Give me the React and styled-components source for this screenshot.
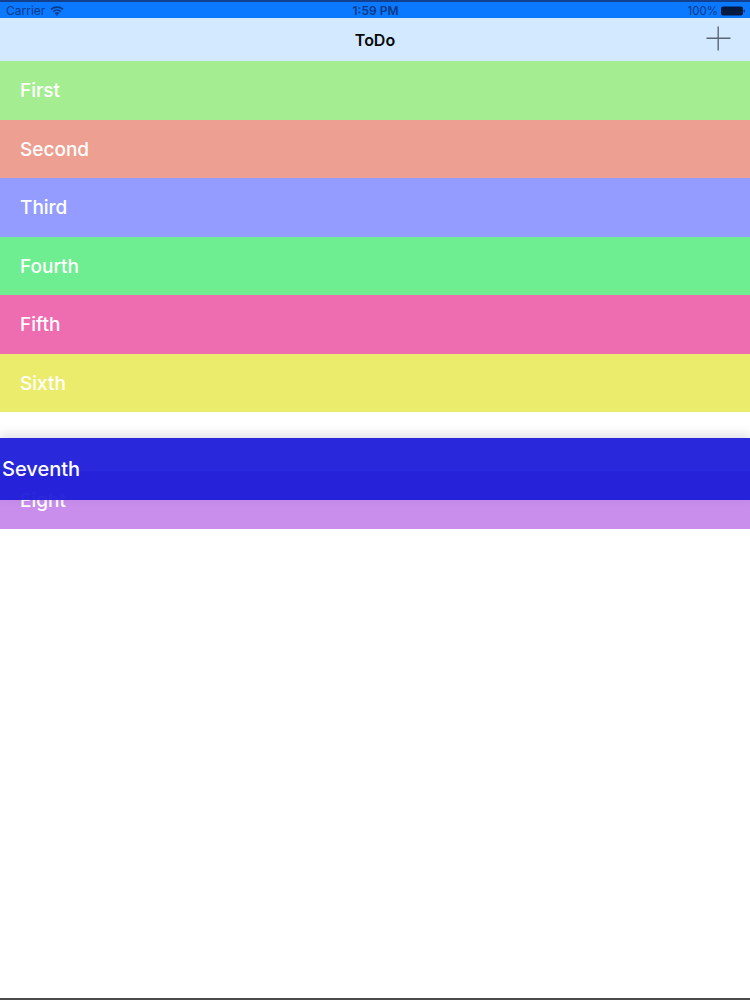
import styled, { createGlobalStyle } from "styled-components";

const GlobalStyle = createGlobalStyle`
  html, body {
    margin: 0;
    padding: 0;
    background: #fff;
  }
`;

const Screen = styled.div`
  position: relative;
  display: flex;
  flex-direction: column;
  width: 750px;
  height: 1000px;
  overflow: hidden;
  background: #fff;
  font-family: Inter, "Liberation Sans", sans-serif;
  box-sizing: border-box;
  border-bottom: 2px solid #4a4a4c;
`;

const StatusBar = styled.div`
  display: grid;
  grid-template-columns: 1fr auto 1fr;
  align-items: center;
  height: 18px;
  padding: 2px 5px 0 6px;
  box-sizing: border-box;
  flex-shrink: 0;
  background: #0a78ff;
  border-top: 2px solid #10408f;
  color: #0b3a86;
  font-size: 11.5px;
  line-height: 14px;
`;

const StatusLeft = styled.div`
  display: flex;
  align-items: center;
  gap: 5px;
  font-size: 12px;
`;

const StatusTime = styled.div`
  font-weight: 600;
  font-size: 12px;
`;

const StatusRight = styled.div`
  display: flex;
  align-items: center;
  justify-content: flex-end;
  gap: 3px;
`;

const NavBar = styled.div`
  position: relative;
  display: flex;
  align-items: center;
  justify-content: center;
  height: 43px;
  flex-shrink: 0;
  background: #d3e9ff;
`;

const NavTitle = styled.div`
  color: #0a0a0a;
  font-size: 16px;
  font-weight: 600;
`;

const AddButton = styled.button`
  position: absolute;
  right: 19px;
  top: 8px;
  display: flex;
  width: 25px;
  height: 25px;
  padding: 0;
  border: 0;
  background: none;
`;

const List = styled.div`
  display: flex;
  flex-direction: column;
`;

const Row = styled.div`
  display: flex;
  align-items: center;
  height: 58.5px;
  padding: 0.6px 0 0 ${(p) => p.$inset ?? 20}px;
  box-sizing: border-box;
  flex-shrink: 0;
  background: ${(p) => p.$color};
  color: #fff;
  font-size: 19px;
  font-weight: 500;
`;

const DragRow = styled(Row)`
  position: absolute;
  left: 0;
  right: 0;
  top: 438px;
  height: 62px;
  padding-top: 0;
  font-size: 20px;
  opacity: 0.94;
  box-shadow: 0 -3px 10px rgba(60, 60, 110, 0.18);
`;

const Wifi = () => (
  <svg width="14" height="10" viewBox="0 0 14 10" fill="none" stroke="#0b3a86" strokeWidth="1.6">
    <path d="M1 3.4C4.4 .4 9.6 .4 13 3.4" />
    <path d="M3.2 5.6c2.2-1.9 5.4-1.9 7.6 0" />
    <path d="M5.3 7.6c1-.8 2.4-.8 3.4 0" />
    <path d="M7 10 5.6 8.5h2.8z" fill="#0b3a86" stroke="none" />
  </svg>
);

const Battery = () => (
  <svg width="24" height="10" viewBox="0 0 24 10">
    <rect x="0" y="0.5" width="22" height="9" rx="2" fill="#061a40" />
    <rect x="22.5" y="3.5" width="1.5" height="3" rx="0.7" fill="#0b3a86" />
  </svg>
);

const Plus = () => (
  <svg width="25" height="25" viewBox="0 0 25 25" stroke="#5b6670" strokeWidth="1.4">
    <path d="M12.2 0.5v24M0.5 12.2h24" />
  </svg>
);

const rows = [
  ["First", "#a5ed91"],
  ["Second", "#ed9f91"],
  ["Third", "#949cff"],
  ["Fourth", "#6fed91"],
  ["Fifth", "#ee6cb0"],
  ["Sixth", "#ecec6c"],
  ["", "#fff"],
  ["Eight", "#c98eec"],
];

export default function App() {
  return (
    <Screen>
      <GlobalStyle />
      <StatusBar>
        <StatusLeft>
          Carrier
          <Wifi />
        </StatusLeft>
        <StatusTime>1:59 PM</StatusTime>
        <StatusRight>
          100%
          <Battery />
        </StatusRight>
      </StatusBar>
      <NavBar>
        <NavTitle>ToDo</NavTitle>
        <AddButton>
          <Plus />
        </AddButton>
      </NavBar>
      <List>
        {rows.map(([label, color], i) => (
          <Row key={i} $color={color}>
            {label}
          </Row>
        ))}
      </List>
      <DragRow $color="#1c1cd9" $inset={2}>
        Seventh
      </DragRow>
    </Screen>
  );
}
